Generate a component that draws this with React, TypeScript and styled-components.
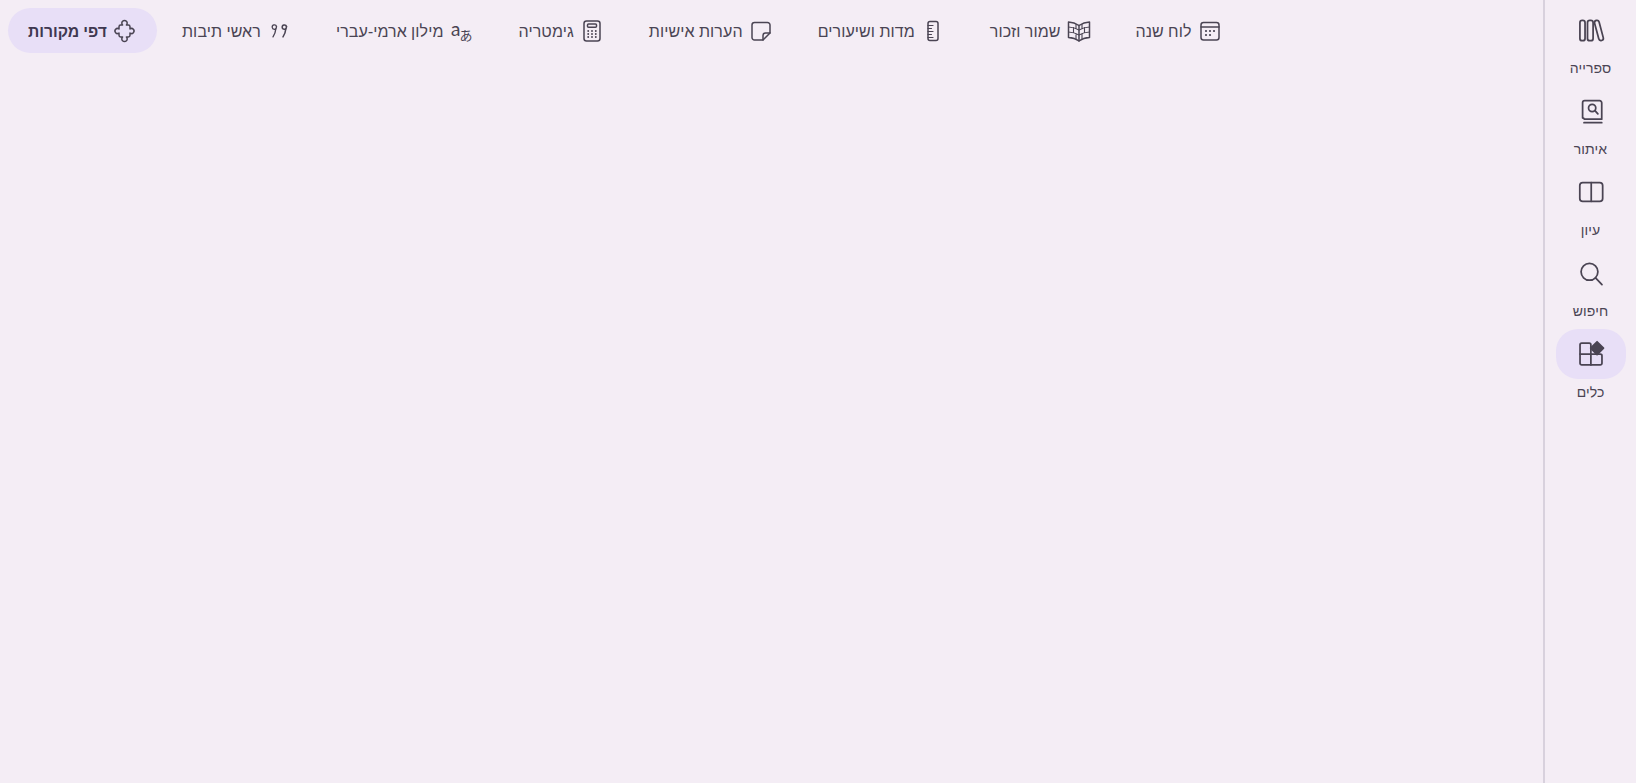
import React from "react";
import styled, { createGlobalStyle } from "styled-components";

const GlobalStyle = createGlobalStyle`
  html, body {
    margin: 0;
    height: 100%;
    background: #f4edf5;
  }
  #root {
    height: 100%;
  }
`;

const Shell = styled.div`
  direction: rtl;
  display: flex;
  height: 783px;
  background: #f4edf5;
  color: #4a4453;
  font-family: "Noto Sans", Roboto, "Noto Sans CJK SC", sans-serif;
`;

const Rail = styled.nav`
  width: 91px;
  flex: none;
  display: flex;
  flex-direction: column;
  align-items: center;
  padding-top: 5px;
  border-left: 2px solid #d8d1dd;
`;

const RailItem = styled.div`
  display: flex;
  flex-direction: column;
  align-items: center;
  height: 81px;
`;

const RailIcon = styled.div<{ $active?: boolean }>`
  width: 70px;
  height: 50px;
  border-radius: 22px;
  display: flex;
  align-items: center;
  justify-content: center;
  background: ${(p) => (p.$active ? "#e8dff7" : "transparent")};
`;

const RailLabel = styled.span`
  margin-top: 3px;
  font-size: 14px;
  line-height: 20px;
  letter-spacing: 0.1px;
`;

const Main = styled.main`
  flex: 1;
  min-width: 0;
`;

const TabBar = styled.div`
  display: flex;
  justify-content: flex-end;
  gap: 5px;
  padding-top: 8px;
  margin-left: 8px;
`;

const Tab = styled.div<{ $active?: boolean }>`
  display: flex;
  align-items: center;
  gap: 6px;
  height: 45px;
  padding: 0 20px;
  border-radius: 23px;
  font-size: ${(p) => (p.$active ? "15.7px" : "16px")};
  letter-spacing: ${(p) => (p.$active ? "0" : "0.1px")};
  font-weight: ${(p) => (p.$active ? 600 : 400)};
  background: ${(p) => (p.$active ? "#e8dff7" : "transparent")};
  color: ${(p) => (p.$active ? "#3f3850" : "#4a4453")};
  white-space: nowrap;
`;

const IconSvg = styled.svg`
  flex: none;
  overflow: visible;
`;

const IconText = styled.text<{ $size: number }>`
  direction: ltr;
  font-family: "Noto Sans CJK JP", "Noto Sans", sans-serif;
  font-size: ${(p) => p.$size}px;
  fill: #4a4453;
  stroke: none;
`;

const Svg: React.FC<{ size: number; children: React.ReactNode }> = ({ size, children }) => (
  <IconSvg
    width={size}
    height={size}
    viewBox="0 0 24 24"
    fill="none"
    stroke="#4a4453"
    strokeWidth="1.5"
    strokeLinecap="round"
    strokeLinejoin="round"
  >
    {children}
  </IconSvg>
);

const LibraryIcon = () => (
  <Svg size={28}>
    <rect x="2.500" y="3.700" width="4.400" height="17.500" rx="2" />
    <rect x="9" y="3.700" width="4.800" height="17.500" rx="2" />
    <rect x="16.800" y="3.500" width="4" height="17.800" rx="2" transform="rotate(-15 18.800 12.400)" />
  </Svg>
);

const BookSearchIcon = () => (
  <Svg size={28}>
    <path d="M4.800 18V5A1.800 1.800 0 0 1 6.600 3.200h12.800A1.800 1.800 0 0 1 21.200 5V19H6.300A1.500 1.500 0 0 0 4.800 18z" />
    <path d="M6 22H21.200" />
    <circle cx="13" cy="9.400" r="3.100" />
    <path d="M15.400 11.700l2.500 2.800" />
  </Svg>
);

const BookOpenIcon = () => (
  <Svg size={28}>
    <rect x="2.400" y="4" width="19.600" height="16" rx="2.500" />
    <path d="M12.200 4v16" />
  </Svg>
);

const SearchIcon = () => (
  <Svg size={28}>
    <circle cx="10.700" cy="11" r="7.200" />
    <path d="M15.900 16.200L21.400 22" />
  </Svg>
);

const ToolsIcon = () => (
  <Svg size={28}>
    <path d="M4 2.600h6.500a1.400 1.400 0 0 1 1.400 1.400V21.400H4a1.400 1.400 0 0 1-1.400-1.400V4A1.400 1.400 0 0 1 4 2.600z" />
    <path d="M2.600 12H20a1.400 1.400 0 0 1 1.400 1.400V20a1.400 1.400 0 0 1-1.400 1.400H11.900" />
    <path d="M17.200 1.500l5.500 5.500-5.500 5.500-5.500-5.500z" fill="#4a4453" />
  </Svg>
);

const CalendarIcon = () => (
  <Svg size={24}>
    <rect x="3" y="3.500" width="18" height="17.500" rx="2.500" />
    <path d="M3 8h18" />
    <path d="M8 12h.01M12 12h.01M16 12h.01M8 16h.01M12 16h.01" strokeWidth="2.200" />
  </Svg>
);

const OpenTableIcon = () => (
  <Svg size={24}>
    <path d="M12 6.500C9 4.500 5.500 3.200 1.500 3V18.500c4 .2 7.500 1.300 10.500 3.500 3-2.200 6.500-3.300 10.500-3.500V3c-4 .2-7.500 1.500-10.500 3.500z" />
    <path d="M12 6.500V22" />
    <path
      d="M1.500 8c4 .2 7.500 1.300 10.500 3 3-1.700 6.500-2.800 10.500-3M1.500 13c4 .2 7.500 1.300 10.500 3 3-1.700 6.500-2.800 10.500-3M6.500 8.500v5M17.500 8.500v5M9 5.500v4M15 5.500v4M9 14.500v5M15 14.500v5"
      strokeWidth="1.100"
    />
  </Svg>
);

const RulerIcon = () => (
  <Svg size={24}>
    <rect x="7" y="2.500" width="10" height="19" rx="2" />
    <path d="M7 6.500h5M7 9.500h3.500M7 12.500h5M7 15.500h3.500M7 18.500h5" strokeWidth="1.200" />
  </Svg>
);

const NoteIcon = () => (
  <Svg size={24}>
    <path d="M21 14V6a2.500 2.500 0 0 0-2.500-2.500h-13A2.500 2.500 0 0 0 3 6v12.500A2.500 2.500 0 0 0 5.500 21H14z" />
    <path d="M21 14h-4.500a2.500 2.500 0 0 0-2.500 2.500V21" />
  </Svg>
);

const CalculatorIcon = () => (
  <Svg size={24}>
    <rect x="4" y="2" width="16" height="20" rx="2.500" />
    <rect x="7.500" y="5" width="9" height="3.200" rx="1" />
    <path d="M8.200 12h.01M12 12h.01M15.800 12h.01M8.200 15h.01M12 15h.01M15.800 15h.01M8.200 18h.01M12 18h.01M15.800 18h.01" strokeWidth="1.900" />
  </Svg>
);

const TranslateIcon = () => (
  <Svg size={24}>
    <IconText $size={18} x="0.500" y="16.500">a</IconText>
    <IconText $size={13} x="9.500" y="20.500">あ</IconText>
  </Svg>
);

const QuoteIcon = () => (
  <Svg size={24}>
    <g transform="translate(0 1.500)">
      <path d="M9.500 6a2.200 2.200 0 1 0-2.200 2.800c.5 0 1-.1 1.500-.4-.2 3-1.200 5.500-2.800 8" strokeWidth="1.300" />
      <path d="M9.500 6c0 .8-.2 1.700-.7 2.400" strokeWidth="1.300" />
      <path d="M19.500 6a2.200 2.200 0 1 0-2.200 2.800c.5 0 1-.1 1.500-.4-.2 3-1.200 5.500-2.800 8" strokeWidth="1.500" />
      <path d="M19.500 6c0 .8-.2 1.700-.7 2.400" strokeWidth="1.500" />
    </g>
  </Svg>
);

const PuzzleIcon = () => (
  <Svg size={24}>
    <path d="M9.600 6A2.700 2.700 0 1 1 13.400 6H15.300Q17 6 17 7.700V10A2.500 2.500 0 1 1 17 14V16.300Q17 18 15.300 18H13.400A2.700 2.700 0 1 1 9.600 18H7.700Q6 18 6 16.300V14A2.500 2.500 0 1 1 6 10V7.700Q6 6 7.700 6z" />
  </Svg>
);

const railItems = [
  { label: "ספרייה", icon: <LibraryIcon /> },
  { label: "איתור", icon: <BookSearchIcon /> },
  { label: "עיון", icon: <BookOpenIcon /> },
  { label: "חיפוש", icon: <SearchIcon /> },
  { label: "כלים", icon: <ToolsIcon />, active: true },
];

const tabs = [
  { label: "לוח שנה", icon: <CalendarIcon /> },
  { label: "שמור וזכור", icon: <OpenTableIcon /> },
  { label: "מדות ושיעורים", icon: <RulerIcon /> },
  { label: "הערות אישיות", icon: <NoteIcon /> },
  { label: "גימטריה", icon: <CalculatorIcon /> },
  { label: "מילון ארמי-עברי", icon: <TranslateIcon /> },
  { label: "ראשי תיבות", icon: <QuoteIcon /> },
  { label: "דפי מקורות", icon: <PuzzleIcon />, active: true },
];

export default function App() {
  return (
    <>
      <GlobalStyle />
      <Shell>
        <Rail>
          {railItems.map((item) => (
            <RailItem key={item.label}>
              <RailIcon $active={item.active}>{item.icon}</RailIcon>
              <RailLabel>{item.label}</RailLabel>
            </RailItem>
          ))}
        </Rail>
        <Main>
          <TabBar>
            {tabs.map((tab) => (
              <Tab key={tab.label} $active={tab.active}>
                {tab.icon}
                <span>{tab.label}</span>
              </Tab>
            ))}
          </TabBar>
        </Main>
      </Shell>
    </>
  );
}
